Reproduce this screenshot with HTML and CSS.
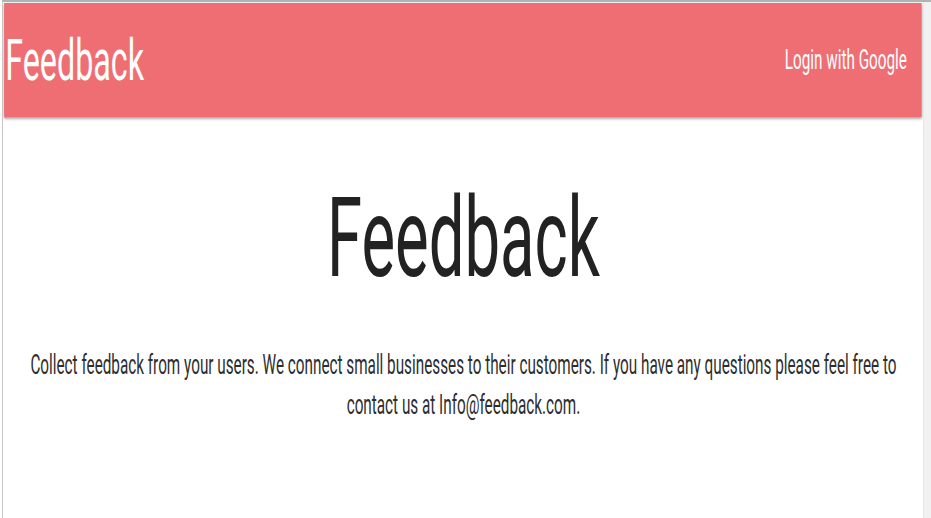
FILE: index.html
```html
<!DOCTYPE html>
<html lang="en">
<head>
<meta charset="utf-8">
<title>Feedback</title>
<link rel="stylesheet" href="styles.css">
</head>
<body>
<div class="window">
  <div class="viewport">
    <div class="page">
      <nav class="navbar">
        <a class="brand" href="#">Feedback</a>
        <ul class="nav-links">
          <li><a href="#">Login with Google</a></li>
        </ul>
      </nav>
      <main class="hero">
        <h1 class="hero-title">Feedback</h1>
        <p class="hero-text">Collect feedback from your users. We connect small businesses to their customers. If you have any questions please feel free to contact us at Info@feedback.com.</p>
      </main>
    </div>
  </div>
  <div class="scroll-track"></div>
</div>
</body>
</html>
```

FILE: styles.css
```css
html, body {
  margin: 0;
  padding: 0;
  background: #ffffff;
  overflow: hidden;
}

.window {
  box-sizing: border-box;
  height: 518px;
  margin-left: 2px;
  width: 929px;
  border-top: 2px solid #aeb4b1;
  border-left: 1px solid #c6c6c6;
  display: flex;
}

.viewport {
  flex: 1;
  overflow: hidden;
  position: relative;
}

.scroll-track {
  width: 7px;
  background: #f1f1f1;
  border-left: 1px solid #e8e8e8;
}

.page {
  width: 1627px;
  transform: scaleX(0.566);
  transform-origin: 0 0;
  font-family: Roboto, "Noto Sans", sans-serif;
}

.navbar {
  height: 114px;
  margin: 1px 4px 0 2px;
  background: #ee6e73;
  display: flex;
  align-items: center;
  justify-content: space-between;
  box-shadow: 0 2px 2px 0 rgba(0,0,0,.16), 0 3px 1px -2px rgba(0,0,0,.14), 0 1px 6px 0 rgba(0,0,0,.24);
}

.brand {
  color: #ffffff;
  text-decoration: none;
  font-size: 57px;
  line-height: 1;
  padding-left: 2px;
}

.nav-links {
  list-style: none;
  margin: 0;
  padding: 0 26px 0 0;
}

.nav-links a {
  color: #ffffff;
  text-decoration: none;
  font-size: 27px;
  line-height: 1;
}

.hero {
  text-align: center;
  padding: 0 30px;
}

.hero-title {
  margin: 58px 0 0;
  font-size: 112px;
  font-weight: 400;
  line-height: 125px;
  color: #222222;
}

.hero-text {
  margin: 45px 0 0;
  font-size: 27px;
  line-height: 40px;
  color: #2e2e2e;
}
```
